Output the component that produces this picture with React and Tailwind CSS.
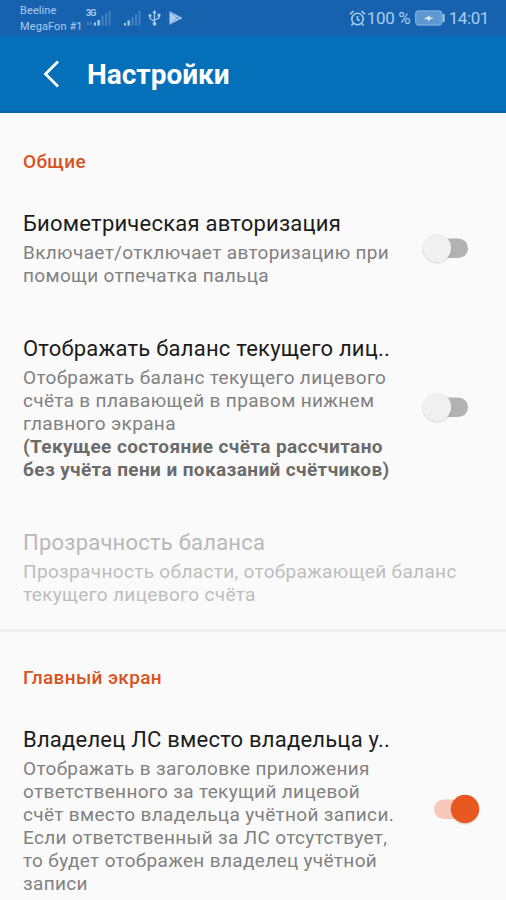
const Signal = () => (
  <svg width="17" height="16" viewBox="0 0 17 16" fill="#a9cdee">
    <rect x="0" y="13" width="2" height="2.500" />
    <rect x="3.500" y="10.500" width="2.300" height="5" />
    <rect x="7.500" y="7" width="2" height="8.500" opacity=".3" />
    <rect x="11" y="4" width="2" height="11.500" opacity=".3" />
    <rect x="14.500" y="0.500" width="2" height="15" opacity=".3" />
  </svg>
)

const StatusBar = () => (
  <div className="flex h-9 items-center bg-[#1762af] pl-5 pr-[17px] text-[#a9cdee]">
    <div className="w-[65px] whitespace-nowrap pt-px text-[11px] leading-[15.5px] tracking-[0.1px]">
      <div>Beeline</div>
      <div>MegaFon #1</div>
    </div>

    {/* Network 1 */}
    <div className="relative h-4 w-[26px]">
      <span className="absolute left-px -top-px text-[9px] font-bold leading-[9px] tracking-[-0.8px]">3G</span>
      <svg className="absolute left-0 top-0" width="26" height="16" viewBox="0 0 26 16" fill="#a9cdee">
        <rect x="2" y="12" width="2" height="3" opacity=".3" />
        <rect x="5" y="12" width="2" height="3" opacity=".3" />
        <rect x="9" y="12.500" width="2" height="3" />
        <rect x="12.500" y="10" width="2.300" height="5.500" />
        <rect x="16.500" y="6" width="2" height="9.500" opacity=".3" />
        <rect x="20" y="3" width="2" height="12.500" opacity=".3" />
        <rect x="23.500" y="0.500" width="2" height="15" opacity=".3" />
      </svg>
    </div>
    <div className="ml-[13px]"><Signal /></div>

    {/* USB */}
    <svg className="ml-[7px]" width="13" height="16" viewBox="0 0 13 16" fill="none" stroke="#a9cdee" strokeWidth="1.300">
      <path d="M6.500 2v11M2 6v2.500l4.500 2.800M11 5.500V8L6.500 10" />
      <path d="M6.500 0L8.700 3.200h-4.400z" fill="#a9cdee" stroke="none" />
      <circle cx="6.500" cy="13.800" r="1.900" fill="#a9cdee" stroke="none" />
      <circle cx="2" cy="5.500" r="1.500" fill="#a9cdee" stroke="none" />
      <rect x="9.600" y="3.800" width="2.800" height="2.800" fill="#a9cdee" stroke="none" />
    </svg>

    {/* Play */}
    <svg className="ml-2" width="14" height="14" viewBox="0 0 14 14">
      <path d="M0.500 0.300L13.500 7L0.500 13.700z" fill="#a9cdee" />
      <path d="M1 0.500L8 7L1 13.500M8 7l2.500-1.700M8 7l2.500 1.700" fill="none" stroke="#5d95cb" strokeWidth="0.900" />
    </svg>

    <div className="ml-auto flex items-center">
      <svg width="17" height="17" viewBox="0 0 17 17" fill="none" stroke="#a9cdee" strokeWidth="1.600">
        <circle cx="8.500" cy="9" r="5.700" />
        <path d="M8.500 6v3.500l2.200 1.300M1 4.200L4.500 1.200M16 4.200L12.500 1.200M4 13.500l-1.500 2M13 13.500l1.500 2" />
      </svg>
      <span className="ml-px w-[48px] whitespace-nowrap text-[17px] leading-6 tracking-[-0.3px]">100 %</span>
      <svg width="30" height="16" viewBox="0 0 30 16">
        <rect x="0.700" y="0.900" width="26.200" height="14.200" rx="2.500" fill="#5f98d0" stroke="#8dbae3" strokeWidth="1" />
        <rect x="27.600" y="4" width="2" height="8" rx="0.500" fill="#a9cdee" />
        <path d="M8.500 8.500l4-1.200 1.500-2.300 1 2.200 4 .800-4 1.200-1.500 2.200-1-2.100z" fill="#dcecfa" />
      </svg>
      <span className="ml-1 text-[17px] leading-6 tracking-[-0.4px]">14:01</span>
    </div>
  </div>
)

const Switch = ({ on }) => (
  <svg className={`shrink-0 ${on ? 'mb-[3px]' : 'mb-0.5'}`} width="60" height="40" viewBox="0 0 60 40">
    {on ? (
      <>
        <rect x="14" y="10.500" width="40" height="19.500" rx="9.750" fill="#f8c9b8" />
        <circle cx="45" cy="21.300" r="14.300" fill="#000" opacity=".1" />
        <circle cx="45" cy="20" r="14.200" fill="#ea5822" />
      </>
    ) : (
      <>
        <rect x="8" y="10.500" width="40" height="19.500" rx="9.750" fill="#b2b2b2" />
        <circle cx="17" cy="20.900" r="14.800" fill="#000" opacity=".1" />
        <circle cx="17" cy="20" r="14.300" fill="#f0f0f0" />
      </>
    )}
  </svg>
)

const Section = ({ children }) => (
  <h2 className="text-[19px] font-medium leading-6 tracking-[0.37px] text-[#d9531e]">{children}</h2>
)

const Row = ({ title, lines, bold = [], on, disabled }) => (
  <div className="flex items-center justify-between">
    <div className="whitespace-nowrap">
      <h3 className={`text-[22px] leading-7 tracking-[0.22px] ${disabled ? 'text-[#b8b8b8]' : 'text-[#1c1c1c]'}`}>{title}</h3>
      <div className={`mt-[3px] text-[19px] leading-[23px] tracking-[0.34px] ${disabled ? 'text-[#bdbdbd]' : 'text-[#818181]'}`}>
        {lines.map((line) => <p key={line}>{line}</p>)}
        {bold.map((line) => <p key={line} className="font-bold tracking-[0.39px] text-[#6b6b6b]">{line}</p>)}
      </div>
    </div>
    {!disabled && <Switch on={on} />}
  </div>
)

const App = () => {
  return (
    <div className="h-[900px] w-[506px] overflow-hidden bg-[#fafafa] font-['Roboto',sans-serif]">
      <StatusBar />
      <header className="flex h-[77px] items-center border-b-2 border-[#0b61a6] bg-[#0470ba] pl-[43px] text-white">
        <svg width="17" height="28" viewBox="0 0 17 28" fill="none" stroke="currentColor" strokeWidth="2.800">
          <path d="M15 1.500L2.500 14L15 26.500" />
        </svg>
        <h1 className="ml-[27px] pt-0.5 text-[28px] font-bold leading-8">Настройки</h1>
      </header>

      <section className="pl-[23px] pr-[26px]">
        <div className="pt-[37px]">
          <Section>Общие</Section>
        </div>
        <div className="pt-9">
          <Row
            title="Биометрическая авторизация"
            lines={['Включает/отключает авторизацию при', 'помощи отпечатка пальца']}
          />
        </div>
        <div className="pt-12">
          <Row
            title="Отображать баланс текущего лиц.."
            lines={['Отображать баланс текущего лицевого', 'счёта в плавающей в правом нижнем', 'главного экрана']}
            bold={['(Текущее состояние счёта рассчитано', 'без учёта пени и показаний счётчиков)']}
          />
        </div>
        <div className="pt-12">
          <Row
            disabled
            title="Прозрачность баланса"
            lines={['Прозрачность области, отображающей баланс', 'текущего лицевого счёта']}
          />
        </div>
      </section>

      <div className="mt-[23px] h-[3px] bg-[#ededed]" />

      <section className="pl-[23px] pr-[26px]">
        <div className="pt-[34px]">
          <Section>Главный экран</Section>
        </div>
        <div className="pt-9">
          <Row
            on
            title="Владелец ЛС вместо владельца у.."
            lines={[
              'Отображать в заголовке приложения',
              'ответственного за текущий лицевой',
              'счёт вместо владельца учётной записи.',
              'Если ответственный за ЛС отсутствует,',
              'то будет отображен владелец учётной',
              'записи',
            ]}
          />
        </div>
      </section>
    </div>
  )
}

export default App
